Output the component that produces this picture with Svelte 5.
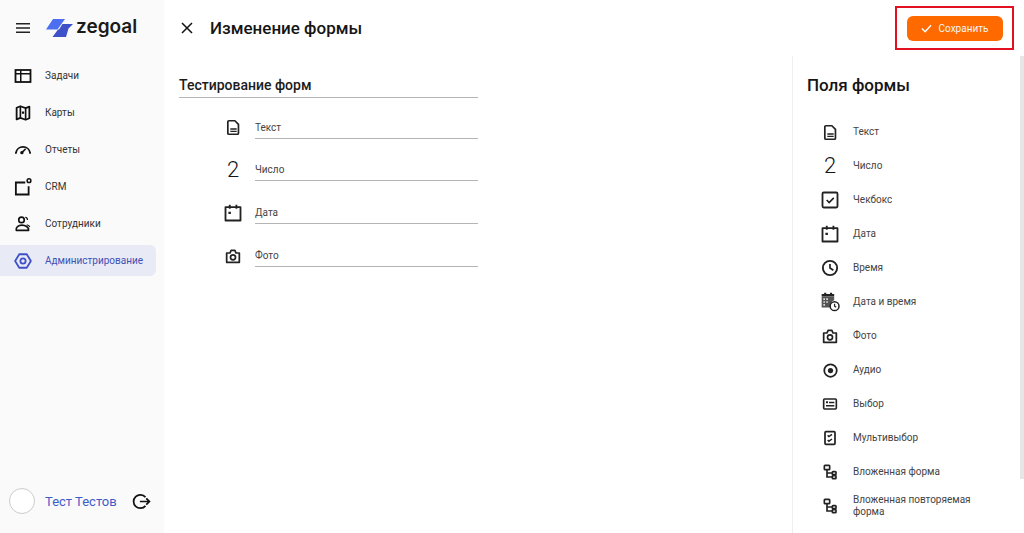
<script>
  const I = {
    doc: `<path d="M5.500 2.500h8.500l5 5v12.500a1.500 1.500 0 0 1-1.500 1.500h-12A1.500 1.500 0 0 1 4 20V4a1.500 1.500 0 0 1 1.500-1.500Z" fill="none" stroke="currentColor" stroke-width="2.400" stroke-linejoin="round"/><path d="M7.500 13h9v2h-9zM7.500 16.500h9v2h-9z" fill="currentColor"/>`,
    check: `<rect x="3" y="3" width="18" height="18" rx="1.500" fill="none" stroke="currentColor" stroke-width="2.200"/><path d="m8 12 3 3 5.500-5.500" fill="none" stroke="currentColor" stroke-width="2"/>`,
    cal: `<path d="M3 5h18v16H3z" fill="none" stroke="currentColor" stroke-width="2.200" stroke-linejoin="round"/><path d="M7 2h2.200v5H7zM15 2h2.200v5H15zM6.500 10.500h3v2.800h-3z" fill="currentColor"/>`,
    clock: `<circle cx="12" cy="12" r="9.500" fill="none" stroke="currentColor" stroke-width="2.500"/><path d="M12 6.500V12l4.500 3" fill="none" stroke="currentColor" stroke-width="2.300"/>`,
    dt: `<path d="M2 2.500h15v2.500H2zM5 1h2.500v3H5zM12 1h2.500v3H12z" fill="currentColor"/><path d="M2 5h15v5a7 7 0 0 0-4.500 8.500H2z" fill="#555"/><path d="M4 7.500h2v2H4zM7.500 7.500h2v2h-2zM4 11h2v2H4zM7.500 11h2v2h-2zM4 14.500h2v2H4z" fill="#ddd"/><circle cx="17.500" cy="17" r="5.300" fill="#fff" stroke="currentColor" stroke-width="1.800"/><path d="M17.500 14v3l2 1.400" fill="none" stroke="currentColor" stroke-width="1.500"/>`,
    cam: `<path d="M2.500 7.500h5L9.200 3.500h5.600l1.700 4h5v14h-19z" fill="none" stroke="currentColor" stroke-width="2.600" stroke-linejoin="round"/><circle cx="12" cy="14" r="3.800" fill="none" stroke="currentColor" stroke-width="2.500"/>`,
    radio: `<circle cx="12" cy="12" r="10" fill="none" stroke="currentColor" stroke-width="2.800"/><circle cx="12" cy="12" r="4.200" fill="currentColor"/>`,
    list: `<rect x="2.500" y="4.500" width="19" height="15" rx="1.500" fill="none" stroke="currentColor" stroke-width="2.500"/><path d="M6 8h3v3H6zM10.500 8.500h8v2.200h-8zM6 13.500h12.500v2.200H6z" fill="currentColor"/>`,
    multi: `<rect x="4.500" y="2.500" width="15" height="19" rx="1.500" fill="none" stroke="currentColor" stroke-width="2.600"/><path d="m8.500 8 1.800 1.800L15 6.500M8.500 15l1.800 1.800L15 13.500" fill="none" stroke="currentColor" stroke-width="2.200"/>`,
    tree: `<rect x="3.500" y="2" width="8" height="6.500" rx="1" fill="none" stroke="currentColor" stroke-width="2.500"/><path d="M7.500 8.500V19.500h8M7.500 13.500h8" fill="none" stroke="currentColor" stroke-width="2.500"/><rect x="15.500" y="11.500" width="5.500" height="4.500" rx="1" fill="none" stroke="currentColor" stroke-width="2.500"/><rect x="15.500" y="17.500" width="5.500" height="4.500" rx="1" fill="none" stroke="currentColor" stroke-width="2.500"/>`,
    tasks: `<rect x="2" y="4" width="20" height="16" fill="none" stroke="currentColor" stroke-width="2.400"/><path d="M9 4.500V20M2.500 9H22" fill="none" stroke="currentColor" stroke-width="2"/>`,
    map: `<path d="M3.500 5 8.500 3l7 2.500L20.500 3.500V19l-5 2-7-2.500-5 2Z" fill="none" stroke="currentColor" stroke-width="2.400" stroke-linejoin="round"/><path d="M8.500 4v14M15.500 6v14" stroke="currentColor" stroke-width="2.200"/><path d="M10.500 10h3v3h-3z" fill="currentColor"/>`,
    gauge: `<path d="M2.500 16a9.600 9.600 0 0 1 19 0" fill="none" stroke="currentColor" stroke-width="2.400" stroke-linecap="round"/><circle cx="10.500" cy="15.500" r="2.200" fill="currentColor"/><path d="m10.500 15.500 5-5" stroke="currentColor" stroke-width="2"/>`,
    crm: `<path d="M15 6H2.500v16h17V11" fill="none" stroke="currentColor" stroke-width="2.400"/><circle cx="20" cy="3.500" r="2.500" fill="none" stroke="currentColor" stroke-width="2"/>`,
    people: `<circle cx="10" cy="6.500" r="3.700" fill="none" stroke="currentColor" stroke-width="2.200"/><path d="M3 20.500c-1-4 3-7 7.500-7s9.500 2.500 9 7Z" fill="none" stroke="currentColor" stroke-width="2.200" stroke-linejoin="round"/><path d="M15 3c2 .3 3 1.800 3 3.500M17 13c2 .5 3.500 1.500 4 3" fill="none" stroke="currentColor" stroke-width="1.600"/>`,
    admin: `<path d="M7 3h10l5.500 9-5.500 9H7l-5.500-9Z" fill="none" stroke="currentColor" stroke-width="2.400" stroke-linejoin="round"/><circle cx="12" cy="12" r="3.500" fill="none" stroke="currentColor" stroke-width="2.400"/>`
  };
  const size = { doc: 17, check: 20, cal: 20, clock: 18, dt: 20, cam: 16, radio: 15, list: 16, multi: 16, tree: 16 };

  const nav = [
    ['Задачи', 'tasks'], ['Карты', 'map'], ['Отчеты', 'gauge'],
    ['CRM', 'crm'], ['Сотрудники', 'people'], ['Администрирование', 'admin']
  ];
  const used = [['Текст', 'doc'], ['Число', null], ['Дата', 'cal'], ['Фото', 'cam']];
  const fields = [
    ['Текст', 'doc'], ['Число', null], ['Чекбокс', 'check'], ['Дата', 'cal'], ['Время', 'clock'],
    ['Дата и время', 'dt'], ['Фото', 'cam'], ['Аудио', 'radio'], ['Выбор', 'list'],
    ['Мультивыбор', 'multi'], ['Вложенная форма', 'tree'], ['Вложенная повторяемая форма', 'tree']
  ];
</script>

<div class="page">
  <aside class="side">
    <div class="brand">
      <svg class="burger" viewBox="0 0 14 10" width="14" height="10"><path d="M0 0h14v1.500H0zM0 4.200h14v1.500H0zM0 8.500h14V10H0z" fill="#222"/></svg>
      <svg class="logo" viewBox="0 0 27 18" width="27" height="18">
        <path d="M7 0h12l-7.500 10.500H0Z" fill="#4c6ef0"/>
        <path d="M16.500 5H27l-4.500 4.500L20 18H6.500l5.500-7.500h1Z" fill="#3f51c8"/>
      </svg>
      <span class="word">zegoal</span>
    </div>
    <nav class="nav">
      {#each nav as [label, icon], i}
        <div class="nav-item" class:active={i === 5}>
          <svg viewBox="0 0 24 24" width="18" height="18">{@html I[icon]}</svg>
          <span>{label}</span>
        </div>
      {/each}
    </nav>
    <div class="user">
      <div class="avatar"></div>
      <span class="uname">Тест Тестов</span>
      <svg viewBox="0 0 24 24" width="19" height="19"><path d="M17 6.500A8.500 8.500 0 1 0 17 17.500" fill="none" stroke="#111" stroke-width="2.200"/><path d="M10 12h12M18 8l4 4-4 4" fill="none" stroke="#111" stroke-width="2.200"/></svg>
    </div>
  </aside>

  <main class="main">
    <header class="head">
      <svg class="close" viewBox="0 0 12 12" width="12" height="12"><path d="m1 1 10 10M11 1 1 11" stroke="#111" stroke-width="1.500"/></svg>
      <h1>Изменение формы</h1>
      <div class="mark">
        <button class="save">
          <svg viewBox="0 0 12 10" width="11" height="9"><path d="m1 5 3.500 3.500L11 1.500" fill="none" stroke="#fff" stroke-width="1.600"/></svg>
          Сохранить
        </button>
      </div>
    </header>
    <div class="body">
      <section class="form">
        <h2>Тестирование форм</h2>
        <div class="rows">
          {#each used as [label, icon]}
            <div class="row">
              <div class="ico">
                {#if icon}
                  <svg viewBox="0 0 24 24" width={size[icon]} height={size[icon]}>{@html I[icon]}</svg>
                {:else}
                  <span class="two">2</span>
                {/if}
              </div>
              <div class="input">{label}</div>
            </div>
          {/each}
        </div>
      </section>
      <section class="panel">
        <h3>Поля формы</h3>
        <ul>
          {#each fields as [label, icon]}
            <li>
              <div class="ico">
                {#if icon}
                  <svg viewBox="0 0 24 24" width={size[icon]} height={size[icon]}>{@html I[icon]}</svg>
                {:else}
                  <span class="two">2</span>
                {/if}
              </div>
              <span class="lbl">{label}</span>
            </li>
          {/each}
        </ul>
      </section>
    </div>
  </main>
  <div class="thumb"></div>
</div>

<style>
  :global(body) { margin: 0; background: #fff; overflow: hidden; }
  .page { display: flex; width: 1024px; height: 533px; overflow: hidden; position: relative; font-family: Roboto, sans-serif; color: #222; }
  .side { width: 164px; flex: none; background: #fafafa; display: flex; flex-direction: column; box-sizing: border-box; }
  .brand { display: flex; align-items: center; height: 56px; padding-left: 16px; }
  .logo { margin-left: 16px; }
  .word { font-family: Inter, sans-serif; font-weight: 600; font-size: 19px; margin-left: 3px; color: #1a1a1a; line-height: 1; position: relative; top: -2px; }
  .nav { display: flex; flex-direction: column; gap: 6px; margin-top: 4px; padding-right: 8px; }
  .nav-item { display: flex; align-items: center; height: 31px; padding-left: 14px; gap: 13px; font-size: 10px; color: #333; border-radius: 0 6px 6px 0; }
  .nav-item svg { color: #111; }
  .nav-item.active { background: #e8eaf6; color: #3f51b5; }
  .nav-item.active svg { color: #3f51c8; }
  .user { margin-top: auto; display: flex; align-items: center; height: 28px; margin-bottom: 18px; padding-left: 9px; }
  .avatar { width: 24px; height: 24px; border: 1.500px solid #ccc; border-radius: 50%; background: #fff; }
  .uname { font-size: 13px; color: #3f5bc8; margin-left: 10px; }
  .user svg { margin-left: 15px; }
  .main { flex: 1; display: flex; flex-direction: column; min-width: 0; }
  .head { height: 56px; flex: none; display: flex; align-items: center; padding-left: 17px; }
  .close { flex: none; }
  h1 { font-size: 17px; font-weight: 500; margin: 0 0 0 17px; color: #151515; flex: 1; }
  .mark { border: 2px solid #e3101f; width: 119px; height: 44px; box-sizing: border-box; margin-right: 10px; display: flex; align-items: center; justify-content: center; }
  .save { width: 96px; height: 25px; border: 0; border-radius: 6px; background: #ff6a00; color: #f5f5f5; font: 10px Roboto, sans-serif; display: flex; align-items: center; justify-content: center; gap: 7px; padding: 0; }
  .body { flex: 1; display: flex; min-height: 0; }
  .form { width: 628px; box-sizing: border-box; padding-left: 15px; }
  h2 { font-size: 14px; font-weight: 500; margin: 20px 0 0; width: 299px; height: 21px; line-height: 19px; border-bottom: 1px solid #b5b5b5; color: #1c1c1c; }
  .rows { margin-top: -2px; }
  .row { display: flex; width: 299px; height: 42.670px; align-items: flex-end; }
  .row .ico { width: 76px; height: 22px; padding-left: 32px; display: flex; align-items: center; justify-content: center; box-sizing: border-box; }
  .input { flex: 1; height: 22px; line-height: 21px; font-size: 10px; color: #444; border-bottom: 1px solid #b5b5b5; box-sizing: border-box; }
  .two { font-size: 22px; color: #151515; line-height: 1; font-weight: 300; }
  .panel { flex: 1; border-left: 1px solid #eee; padding-left: 14px; box-sizing: border-box; }
  h3 { font-size: 17px; font-weight: 500; margin: 19px 0 0; line-height: 21px; color: #151515; }
  ul { list-style: none; margin: 19px 0 0; padding: 0; }
  li { display: flex; align-items: center; min-height: 34px; width: 175px; }
  li .ico { width: 46px; flex: none; display: flex; justify-content: center; box-sizing: border-box; }
  .lbl { font-size: 10px; color: #444; line-height: 12px; width: 125px; }
  .thumb { position: absolute; right: 0; top: 56px; width: 4px; height: 423px; background: #e6e6e6; }
</style>
